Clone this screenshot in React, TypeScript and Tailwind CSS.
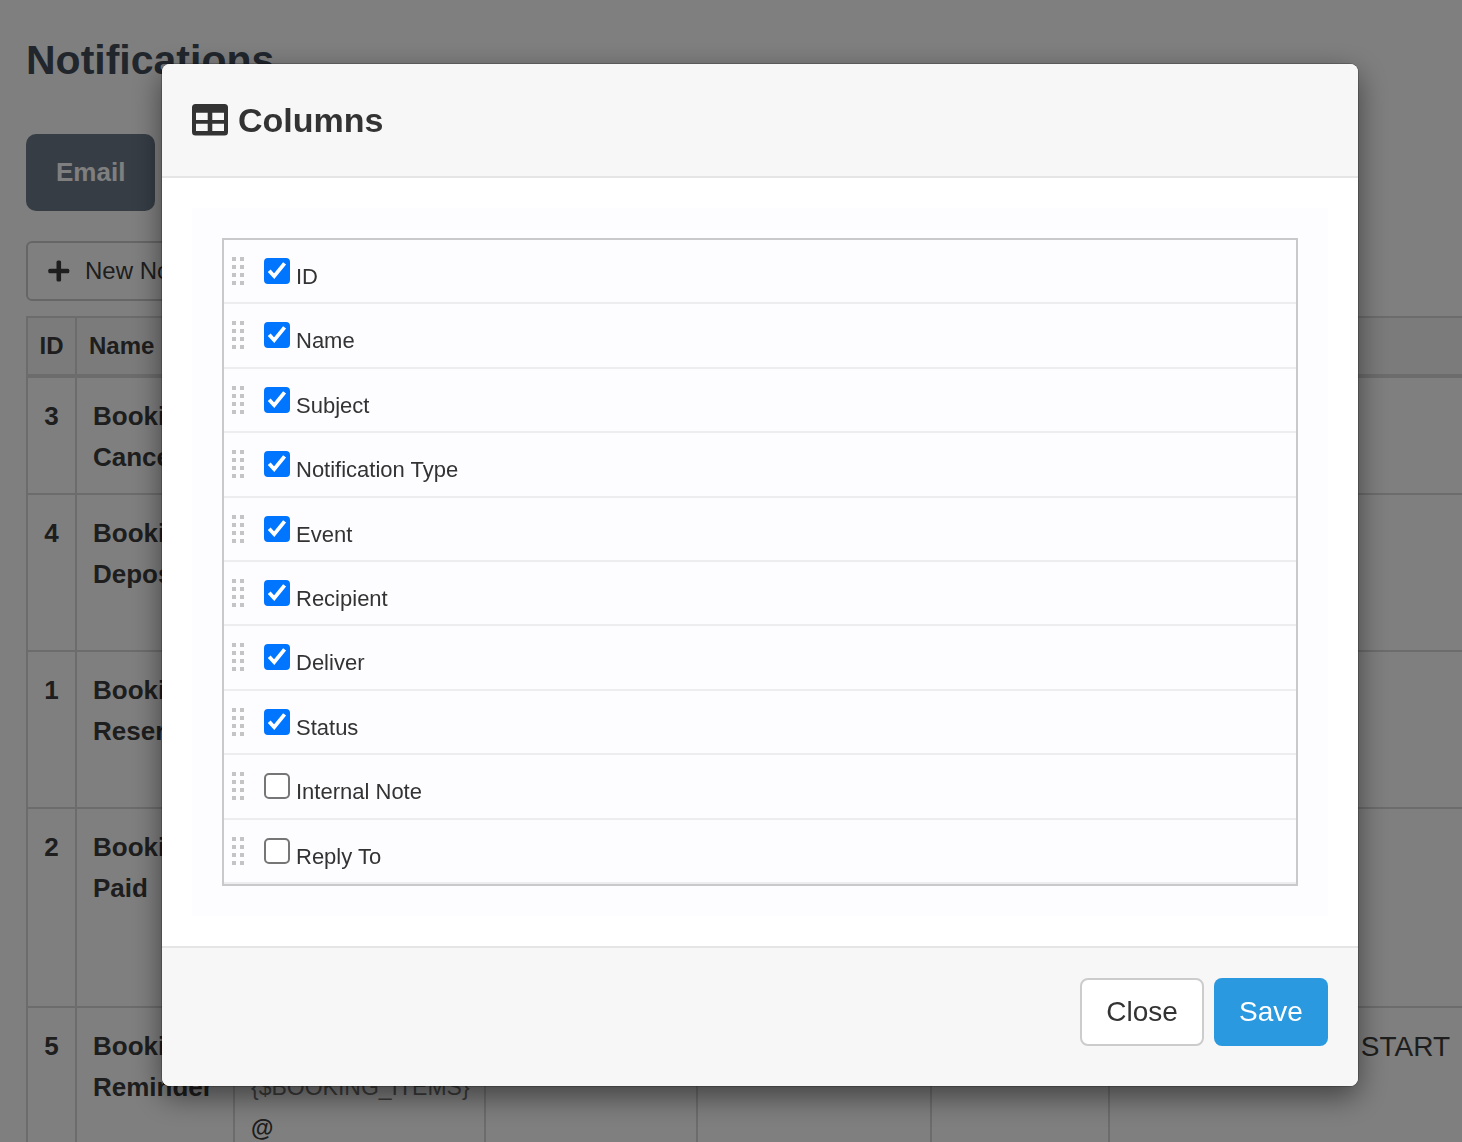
import { useState } from 'react';

const initialColumns = [
  { id: 'id', label: 'ID', visible: true },
  { id: 'name', label: 'Name', visible: true },
  { id: 'subject', label: 'Subject', visible: true },
  { id: 'type', label: 'Notification Type', visible: true },
  { id: 'event', label: 'Event', visible: true },
  { id: 'recipient', label: 'Recipient', visible: true },
  { id: 'deliver', label: 'Deliver', visible: true },
  { id: 'status', label: 'Status', visible: true },
  { id: 'note', label: 'Internal Note', visible: false },
  { id: 'reply', label: 'Reply To', visible: false },
];

const notifications = [
  { id: 3, name: ['Booking', 'Cancelled'], height: 'h-[117px]' },
  { id: 4, name: ['Booking', 'Deposit'], height: 'h-[157px]' },
  { id: 1, name: ['Booking', 'Reserved'], height: 'h-[157px]' },
  { id: 2, name: ['Booking', 'Paid'], height: 'h-[199px]' },
  {
    id: 5,
    name: ['Booking', 'Reminder'],
    height: 'h-[199px]',
    subject: '{$BOOKING_ITEMS}',
    deliver: 'START',
  },
];

function PlusIcon() {
  return (
    <svg className="size-[22px]" viewBox="0 0 22 22" fill="currentColor">
      <rect x="8.500" y="0.500" width="4.600" height="21" rx="1.500" />
      <rect x="0.300" y="8.700" width="21" height="4.600" rx="1.500" />
    </svg>
  );
}

function TableIcon() {
  return (
    <svg className="h-8 w-9" viewBox="0 0 36 32" fill="currentColor" fillRule="evenodd">
      <path d="M3.500 0h29A3.500 3.500 0 0 1 36 3.500v24.500a3.500 3.500 0 0 1-3.500 3.500h-29A3.500 3.500 0 0 1 0 28V3.500A3.500 3.500 0 0 1 3.500 0ZM4 8.700V16h11.700V8.700ZM20.300 8.700V16H32V8.700ZM4 19.800V27h11.700v-7.200ZM20.300 19.800V27H32v-7.200Z" />
    </svg>
  );
}

function DragHandle() {
  return (
    <svg className="h-7 w-3 shrink-0 cursor-move" viewBox="0 0 12 28" fill="#c4c4c4">
      {[0, 8, 16, 24].map((y) => (
        <g key={y}>
          <rect x="0" y={y} width="4" height="4" />
          <rect x="8" y={y} width="4" height="4" />
        </g>
      ))}
    </svg>
  );
}

function NotificationsPage() {
  return (
    <main className="pt-[35px] pl-[26px]">
      <h1 className="text-[41px] leading-[50px] font-bold text-[#434d5a]">Notifications</h1>
      <div className="mt-[49px]">
        <button type="button" className="h-[77px] rounded-[10px] bg-[#6c7a89] px-[30px] text-[26px] font-bold text-white">
          Email
        </button>
      </div>
      <div className="mt-[30px]">
        <button type="button" className="flex h-[60px] items-center gap-[15px] rounded-md border-2 border-[#ccc] px-5 text-2xl">
          <PlusIcon />
          New Notification
        </button>
      </div>

      <table className="mt-[15px] w-full table-fixed border-separate border-spacing-0 text-[26px] leading-[41px]">
        <colgroup>
          <col className="w-[49px]" />
          <col className="w-[158px]" />
          <col className="w-[251px]" />
          <col className="w-[212px]" />
          <col className="w-[234px]" />
          <col className="w-[178px]" />
          <col />
        </colgroup>
        <thead>
          <tr className="h-[62px] bg-[#f7f7f7] text-left text-2xl">
            <th className="border-t-2 border-b-4 border-l-2 border-[#d9d9d9] text-center">ID</th>
            <th className="border-t-2 border-b-4 border-l-2 border-[#d9d9d9] px-3">Name</th>
            <th aria-label="Subject" className="border-t-2 border-b-4 border-l-2 border-[#d9d9d9]" />
            <th aria-label="Notification Type" className="border-t-2 border-b-4 border-l-2 border-[#d9d9d9]" />
            <th aria-label="Event" className="border-t-2 border-b-4 border-l-2 border-[#d9d9d9]" />
            <th aria-label="Recipient" className="border-t-2 border-b-4 border-l-2 border-[#d9d9d9]" />
            <th aria-label="Deliver" className="border-t-2 border-b-4 border-l-2 border-[#d9d9d9]" />
          </tr>
        </thead>
        <tbody>
          {notifications.map((item) => (
            <tr key={item.id} className={`${item.height} align-top`}>
              <td className="border-b-2 border-l-2 border-[#d9d9d9] pt-[18px] text-center font-bold">{item.id}</td>
              <td className="border-b-2 border-l-2 border-[#d9d9d9] px-4 pt-[18px] font-bold">
                {item.name[0]}
                <br />
                {item.name[1]}
              </td>
              <td className="border-b-2 border-l-2 border-[#d9d9d9] px-4 pt-[59px] text-[23px]">
                {item.subject && (
                  <>
                    <span className="text-[#777]">{item.subject}</span>
                    <br />
                    <b>@</b>
                  </>
                )}
              </td>
              <td className="border-b-2 border-l-2 border-[#d9d9d9]" />
              <td className="border-b-2 border-l-2 border-[#d9d9d9]" />
              <td className="border-b-2 border-l-2 border-[#d9d9d9]" />
              <td className="border-b-2 border-l-2 border-[#d9d9d9] px-3 pt-[18px] text-right text-[28px]">{item.deliver}</td>
            </tr>
          ))}
        </tbody>
      </table>
    </main>
  );
}

export default function App() {
  const [columns, setColumns] = useState(initialColumns);

  const toggleColumn = (id: string) => {
    setColumns(columns.map((column) => (column.id === id ? { ...column, visible: !column.visible } : column)));
  };

  return (
    <div className="h-screen overflow-hidden bg-white font-['Liberation_Sans',Arial,sans-serif] text-[#3c3c3c]">
      <NotificationsPage />

      {/* Columns dialog */}
      <div className="fixed inset-0 overflow-hidden bg-black/50 pt-16 pr-[104px] pl-[162px]">
        <section
          role="dialog"
          aria-modal="true"
          aria-labelledby="columns-title"
          className="overflow-hidden rounded-lg bg-white text-[#333] shadow-[0_0_0_1px_rgba(0,0,0,0.2),0_10px_30px_rgba(0,0,0,0.5)]"
        >
          <header className="flex h-[114px] items-center gap-[10px] border-b-2 border-[#e5e5e5] bg-[#f7f7f7] px-[30px]">
            <TableIcon />
            <h2 id="columns-title" className="text-[34px] leading-10 font-bold">
              Columns
            </h2>
          </header>

          <div className="p-[30px]">
            <div className="bg-[#fdfdff] p-[30px]">
              <ul className="grid h-[648px] grid-rows-10 border-2 border-[#c9c9cc]">
                {columns.map((column) => (
                  <li key={column.id} className="flex items-start border-b-2 border-[#ededf0] px-2 pt-[17px]">
                    <DragHandle />
                    <label className="ml-5 flex items-start gap-[6px] text-[22px] leading-10">
                      <span className="mt-px grid">
                        <input
                          type="checkbox"
                          checked={column.visible}
                          onChange={() => toggleColumn(column.id)}
                          className="peer col-start-1 row-start-1 size-[26px] appearance-none rounded-[5px] border-2 border-[#767676] bg-white checked:rounded-sm checked:border-[#0075ff] checked:bg-[#0075ff]"
                        />
                        <svg
                          className="pointer-events-none invisible col-start-1 row-start-1 size-[26px] peer-checked:visible"
                          viewBox="0 0 26 26"
                          fill="none"
                          stroke="#fff"
                          strokeWidth="3.800"
                        >
                          <path d="M5.200 12.800L10.200 18.200L20.600 5.400" />
                        </svg>
                      </span>
                      {column.label}
                    </label>
                  </li>
                ))}
              </ul>
            </div>
          </div>

          <footer className="flex justify-end gap-[10px] border-t-2 border-[#e5e5e5] bg-[#f7f7f7] px-[30px] pt-[30px] pb-10 text-[28px]">
            <button type="button" className="h-[68px] w-[124px] rounded-lg border-2 border-[#ccc] bg-white">
              Close
            </button>
            <button type="button" className="h-[68px] w-[114px] rounded-lg bg-[#2b99e0] text-white">
              Save
            </button>
          </footer>
        </section>
      </div>
    </div>
  );
}
